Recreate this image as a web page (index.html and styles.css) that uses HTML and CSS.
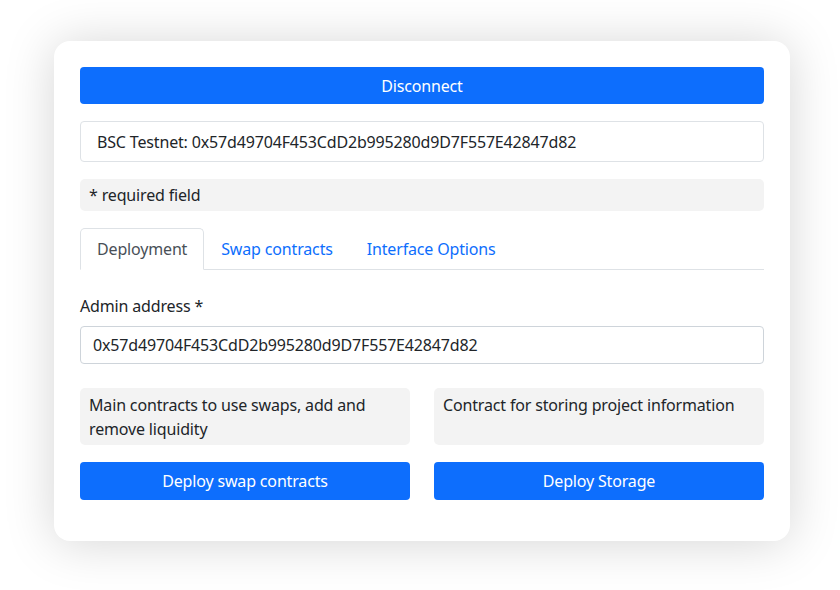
FILE: index.html
```html
<!DOCTYPE html>
<html>
<head>
<meta charset="utf-8">
<link rel="stylesheet" href="styles.css">
</head>
<body>
<div class="page">
  <div class="card">
    <button class="btn btn-full">Disconnect</button>
    <div class="network">BSC Testnet: 0x57d49704F453CdD2b995280d9D7F557E42847d82</div>
    <div class="note">* required field</div>
    <div class="tabs">
      <div class="tab active">Deployment</div>
      <div class="tab">Swap contracts</div>
      <div class="tab">Interface Options</div>
    </div>
    <label class="label">Admin address *</label>
    <div class="input">0x57d49704F453CdD2b995280d9D7F557E42847d82</div>
    <div class="cols">
      <div class="col">
        <div class="desc">Main contracts to use swaps, add and remove liquidity</div>
        <button class="btn">Deploy swap contracts</button>
      </div>
      <div class="col">
        <div class="desc">Contract for storing project information</div>
        <button class="btn">Deploy Storage</button>
      </div>
    </div>
  </div>
</div>
</body>
</html>
```

FILE: styles.css
```css
* { box-sizing: border-box; }
html, body { margin: 0; padding: 0; background: #fff; }
body {
  font-family: "Noto Sans", "Open Sans", sans-serif;
  font-size: 16px;
  line-height: 24px;
  letter-spacing: -0.16px;
  color: #212529;
  min-height: 590px;
}
.page {
  padding: 41px 0 49px 54px;
}
.card {
  width: 736px;
  height: 500px;
  background: #fff;
  border-radius: 16px;
  box-shadow: 0 2px 50px rgba(0, 0, 0, 0.17);
  padding: 26px 26px 0 26px;
  display: flex;
  flex-direction: column;
}
.btn {
  display: block;
  width: 100%;
  height: 38px;
  border: none;
  border-radius: 4px;
  background: #0d6efd;
  color: #fff;
  font-family: inherit;
  font-size: 16px;
  line-height: 24px;
  letter-spacing: -0.16px;
  padding: 6px 12px;
  cursor: pointer;
}
.btn-full { margin-bottom: 17px; height: 37px; }
.network {
  height: 41px;
  border: 1px solid #dee2e6;
  border-radius: 4px;
  padding: 8px 16px;
  margin-bottom: 17px;
}
.note {
  height: 32px;
  background: #f3f3f3;
  border-radius: 5px;
  padding: 4px 9px;
  margin-bottom: 17px;
}
.tabs {
  display: flex;
  border-bottom: 1px solid #dee2e6;
  height: 42px;
}
.tab {
  padding: 8px 16px;
  color: #0d6efd;
  border: 1px solid transparent;
  border-top-left-radius: 5px;
  border-top-right-radius: 5px;
  margin-bottom: -1px;
}
.tab.active {
  color: #495057;
  border-color: #dee2e6 #dee2e6 #fff;
  background: #fff;
}
.label {
  display: block;
  margin-top: 24px;
  margin-bottom: 8px;
}
.input {
  height: 38px;
  border: 1px solid #ced4da;
  border-radius: 4px;
  padding: 6px 12px;
  margin-bottom: 24px;
}
.cols {
  display: grid;
  grid-template-columns: 1fr 1fr;
  column-gap: 24px;
}
.col { display: flex; flex-direction: column; }
.desc {
  height: 57px;
  background: #f3f3f3;
  border-radius: 5px;
  padding: 5px 9px;
  margin-bottom: 17px;
}
```
